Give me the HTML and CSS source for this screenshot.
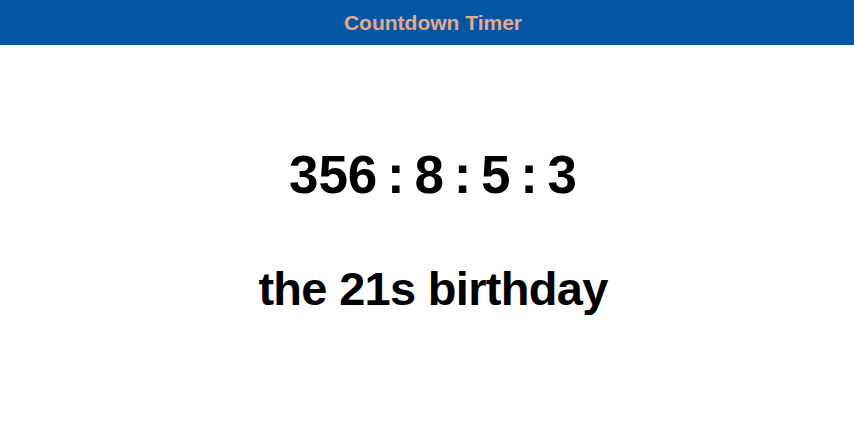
FILE: index.html
```html
<!DOCTYPE html>
<html>
<head>
<meta charset="utf-8">
<link rel="stylesheet" href="styles.css">
</head>
<body>
<header class="bar"><h1 class="title">Countdown Timer</h1></header>
<main class="content">
<div class="timer">356 : 8 : 5 : 3</div>
<div class="event">the 21s birthday</div>
</main>
</body>
</html>
```
FILE: styles.css
```css
html, body { margin: 0; padding: 0; background: #fff; }
body { font-family: "Liberation Sans", Arial, sans-serif; }
.bar { background: #0356a2; height: 45px; display: flex; align-items: center; justify-content: center; padding-left: 12px; }
.title { margin: 0; font-size: 21px; font-weight: bold; color: #e7a88a; }
.content { display: flex; flex-direction: column; align-items: center; padding-left: 12px; }
.timer { margin-top: 101px; font-size: 53px; font-weight: bold; color: #000; line-height: 58px; word-spacing: -5px; }
.event { margin-top: 56px; font-size: 47px; font-weight: bold; color: #000; line-height: 58px; letter-spacing: -0.7px; }
```
